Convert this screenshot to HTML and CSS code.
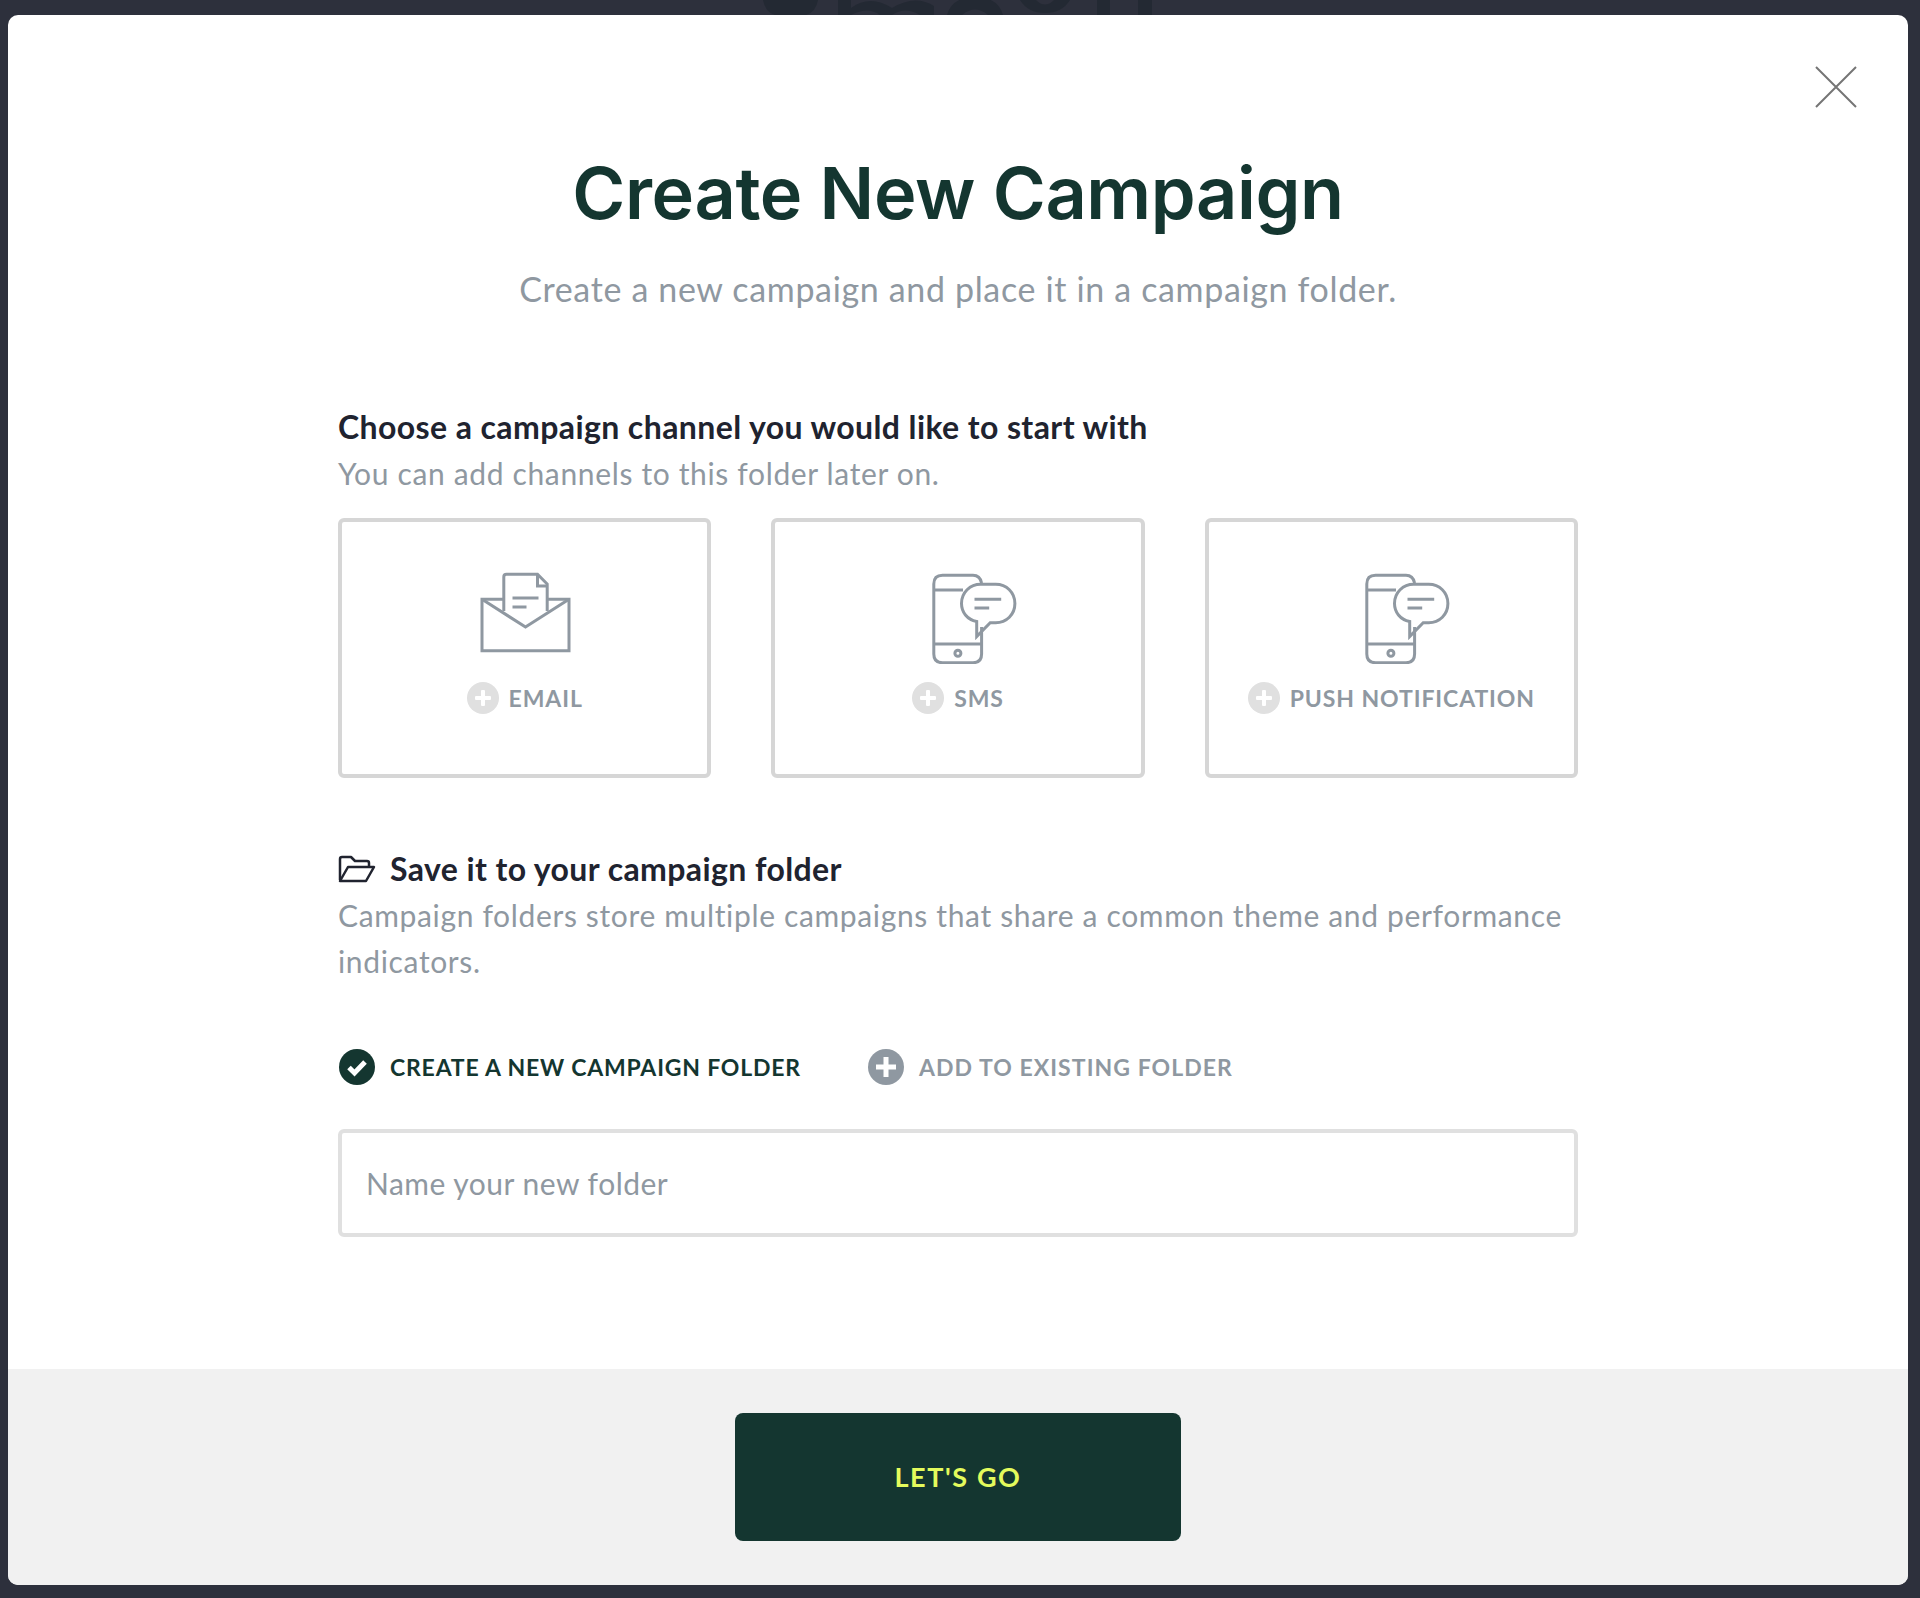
FILE: index.html
```html
<!DOCTYPE html>
<html lang="en">
<head>
    <meta charset="UTF-8">
    <meta name="viewport" content="width=device-width, initial-scale=1.0">
    <title>Create New Campaign</title>
    <link rel="stylesheet" href="styles.css">
</head>
<body>
    <!-- page behind the modal, only a sliver of its logo shows -->
    <svg class="backdrop-logo" width="460" height="15" viewBox="0 0 460 15">
        <path d="M43 0 H98 Q96 12 86 15 H55 Q45 12 43 0 Z"/>
        <path d="M118 0 H131 V15 H118 Z M131 8 Q150 -6 172 8 Q195 -6 214 6 V15 H200 Q185 6 172 15 H160 Q148 6 131 15 Z"/>
        <path d="M227 15 Q232 -3 255 -3 Q278 -3 283 15 H268 Q255 4 242 15 Z"/>
        <path d="M300 0 H316 Q325 9 334 0 H350 Q342 13 325 13 Q308 13 300 0 Z"/>
        <path d="M377 0 H390 V15 H377 Z M418 0 H432 V15 H418 Z"/>
    </svg>
    <div class="modal">
        <button class="close" aria-label="Close">
            <svg width="42" height="42" viewBox="0 0 42 42"><path d="M1 1 L41 41 M41 1 L1 41"/></svg>
        </button>
        <div class="modal-body">
            <h1 class="title">Create New Campaign</h1>
            <p class="subtitle">Create a new campaign and place it in a campaign folder.</p>

            <div class="content">
                <h2 class="heading">Choose a campaign channel you would like to start with</h2>
                <p class="hint">You can add channels to this folder later on.</p>

                <div class="channels">
                    <div class="channel">
                        <svg class="channel-icon" width="92" height="92" viewBox="0 0 92 92">
                            <path d="M24.800 39 V5 Q24.800 2.300 27.500 2.300 H58.500 L68.200 12 V39"/>
                            <path d="M58.500 2.300 V14 H68.200"/>
                            <path d="M33.500 26 H59.500 M33.500 35 H47.500"/>
                            <path d="M24.800 27.300 H3 V78.700 H90 V27.300 H68.200"/>
                            <path d="M3 27.300 L46.500 55 L90 27.300"/>
                        </svg>
                        <div class="channel-label"><span class="plus-dot"></span>EMAIL</div>
                    </div>
                    <div class="channel">
                        <svg class="channel-icon" width="124" height="92" viewBox="0 0 124 92">
                            <path d="M85.600 55 V82 Q85.600 90.700 77 90.700 H46.500 Q37.800 90.700 37.800 82 V12 Q37.800 3.300 46.500 3.300 H77 Q84 3.300 85.600 11"/>
                            <path d="M37.800 18 H67 M37.800 72 H85.600"/>
                            <circle cx="61.900" cy="81.300" r="3"/>
                            <path d="M80.700 49.500 C71 47.500 65.500 40 65.500 31.500 C65.500 20.500 74 12.300 84.700 12.300 H99.700 C110.500 12.300 118.900 20.500 118.900 31.500 C118.900 42.500 110.500 50.700 99.700 50.700 H94.200 L80.700 64.500 Z"/>
                            <path d="M78.500 27.300 H105.200 M78.500 36 H93.200"/>
                        </svg>
                        <div class="channel-label"><span class="plus-dot"></span>SMS</div>
                    </div>
                    <div class="channel">
                        <svg class="channel-icon" width="124" height="92" viewBox="0 0 124 92">
                            <path d="M85.600 55 V82 Q85.600 90.700 77 90.700 H46.500 Q37.800 90.700 37.800 82 V12 Q37.800 3.300 46.500 3.300 H77 Q84 3.300 85.600 11"/>
                            <path d="M37.800 18 H67 M37.800 72 H85.600"/>
                            <circle cx="61.900" cy="81.300" r="3"/>
                            <path d="M80.700 49.500 C71 47.500 65.500 40 65.500 31.500 C65.500 20.500 74 12.300 84.700 12.300 H99.700 C110.500 12.300 118.900 20.500 118.900 31.500 C118.900 42.500 110.500 50.700 99.700 50.700 H94.200 L80.700 64.500 Z"/>
                            <path d="M78.500 27.300 H105.200 M78.500 36 H93.200"/>
                        </svg>
                        <div class="channel-label"><span class="plus-dot"></span>PUSH NOTIFICATION</div>
                    </div>
                </div>

                <h2 class="heading heading-folder">
                    <svg class="folder-icon" width="38" height="28" viewBox="0 0 38 28">
                        <path d="M2 25 V4 Q2 2 4 2 H13 L17 6 H29 Q31 6 31 8 V11"/>
                        <path d="M2 26 H28 L36 12 H10 L2 26 Z"/>
                    </svg>
                    Save it to your campaign folder
                </h2>
                <p class="hint">Campaign folders store multiple campaigns that share a common theme and performance indicators.</p>

                <div class="folder-tabs">
                    <div class="folder-tab active">
                        <svg width="36" height="36" viewBox="0 0 36 36"><circle cx="18" cy="18" r="18"/><path d="M10 18.500 L15.500 24 L26 13"/></svg>
                        CREATE A NEW CAMPAIGN FOLDER
                    </div>
                    <div class="folder-tab">
                        <svg width="36" height="36" viewBox="0 0 36 36"><circle cx="18" cy="18" r="18"/><path d="M18 8 V28 M8 18 H28"/></svg>
                        ADD TO EXISTING FOLDER
                    </div>
                </div>

                <input class="folder-input" type="text" placeholder="Name your new folder">
            </div>
        </div>
        <div class="modal-footer">
            <button class="go">LET'S GO</button>
        </div>
    </div>
</body>
</html>
```

FILE: styles.css
```css
* {
    box-sizing: border-box;
}
html, body {
    height: 100%;
}
body {
    margin: 0;
    padding: 15px 12px 13px 8px;
    background-color: #2d303c;
    font-family: "Lato", "Noto Sans", sans-serif;
}
.backdrop-logo {
    position: absolute;
    top: 0;
    left: 720px;
    fill: #232933;
}
.modal {
    position: relative;
    height: 1570px;
    display: flex;
    flex-direction: column;
    background-color: white;
    border-radius: 10px;
    overflow: hidden;
}
.close {
    position: absolute;
    top: 51px;
    right: 51px;
    padding: 0;
    width: 42px;
    height: 42px;
    border: none;
    background: none;
}
.close svg {
    display: block;
}
.close path {
    fill: none;
    stroke: #757575;
    stroke-width: 2;
}
.modal-body {
    flex: 1;
    padding-top: 138px;
}
.title {
    margin: 0;
    text-align: center;
    font-family: "Inter", sans-serif;
    font-size: 72px;
    line-height: 80px;
    font-weight: 600;
    letter-spacing: -0.4px;
    color: #143630;
}
.subtitle {
    margin: 32px 0 0;
    text-align: center;
    font-size: 34px;
    line-height: 48px;
    letter-spacing: 0.65px;
    color: #8f98a1;
}
.content {
    width: 1240px;
    margin: 91px auto 0;
}
.heading {
    margin: 0;
    font-size: 32px;
    line-height: 46px;
    font-weight: 700;
    letter-spacing: 0.4px;
    color: #20232f;
}
.hint {
    margin: 0;
    font-size: 30px;
    line-height: 46px;
    letter-spacing: 0.65px;
    color: #8f98a1;
}
.channels {
    display: grid;
    grid-template-columns: repeat(3, 1fr);
    gap: 60px;
    margin-top: 22px;
}
.channel {
    height: 260px;
    padding-top: 50px;
    display: flex;
    flex-direction: column;
    align-items: center;
    border: 4px solid #d6d6d6;
    border-radius: 6px;
}
.channel-icon {
    display: block;
}
.channel-icon path, .channel-icon circle {
    fill: none;
    stroke: #8f98a1;
    stroke-width: 3;
}
.channel-label {
    display: flex;
    align-items: center;
    gap: 10px;
    margin-top: 18px;
    font-size: 23px;
    line-height: 32px;
    font-weight: 700;
    letter-spacing: 0.9px;
    color: #8f98a1;
}
.plus-dot {
    position: relative;
    width: 32px;
    height: 32px;
    border-radius: 50%;
    background-color: #e0e0e0;
}
.plus-dot::before, .plus-dot::after {
    content: "";
    position: absolute;
    background-color: white;
    border-radius: 1px;
}
.plus-dot::before {
    left: 8px;
    top: 14px;
    width: 16px;
    height: 4px;
}
.plus-dot::after {
    left: 14px;
    top: 8px;
    width: 4px;
    height: 16px;
}
.heading-folder {
    display: flex;
    align-items: center;
    gap: 14px;
    margin-top: 68px;
}
.folder-icon path {
    fill: none;
    stroke: #20232f;
    stroke-width: 2.500;
    stroke-linejoin: round;
}
.folder-tabs {
    display: flex;
    gap: 67px;
    margin-top: 65px;
    padding-left: 1px;
}
.folder-tab {
    display: flex;
    align-items: center;
    gap: 15px;
    font-size: 23px;
    line-height: 36px;
    font-weight: 700;
    letter-spacing: 1.050px;
    color: #8f98a1;
}
.folder-tab.active {
    color: #143630;
    letter-spacing: 0.8px;
}
.folder-tab svg circle {
    fill: #8f98a1;
}
.folder-tab.active svg circle {
    fill: #143630;
}
.folder-tab svg path {
    fill: none;
    stroke: white;
    stroke-width: 5;
}
.folder-input {
    display: block;
    width: 100%;
    height: 108px;
    margin-top: 44px;
    padding: 0 24px;
    border: 4px solid #e0e0e0;
    border-radius: 6px;
    outline: none;
    font-family: inherit;
    font-size: 30px;
    letter-spacing: 0.5px;
}
.folder-input::placeholder {
    color: #8f98a1;
    opacity: 1;
}
.modal-footer {
    height: 216px;
    display: flex;
    align-items: flex-start;
    justify-content: center;
    padding-top: 44px;
    background-color: #f1f1f1;
}
.go {
    width: 446px;
    height: 128px;
    padding: 0 0 2px;
    border: none;
    border-radius: 8px;
    background-color: #143630;
    font-family: inherit;
    font-size: 27px;
    font-weight: 700;
    letter-spacing: 1.600px;
    color: #e4fb5c;
}
```
